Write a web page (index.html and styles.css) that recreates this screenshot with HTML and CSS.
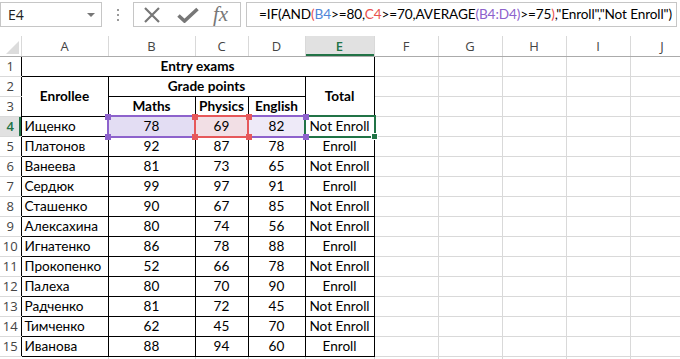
FILE: index.html
```html
<!DOCTYPE html>
<html lang="en">
<head>
    <meta charset="UTF-8">
    <title>Entry exams</title>
    <link rel="stylesheet" href="styles.css">
</head>
<body>
    <div class="formula-bar">
        <div class="name-box">
            <span>E4</span>
            <span class="dropdown"></span>
        </div>
        <div class="grip">
            <span></span><span></span><span></span>
        </div>
        <div class="fx-buttons">
            <svg class="icon" width="18" height="16" viewBox="0 0 18 16">
                <path d="M2 1 L16 15 M16 1 L2 15" stroke="#777" stroke-width="2.2" fill="none"/>
            </svg>
            <svg class="icon" width="22" height="16" viewBox="0 0 22 16">
                <path d="M1.5 8.5 L7.5 14 L20.5 2" stroke="#777" stroke-width="3.6" fill="none"/>
            </svg>
            <span class="fx">fx</span>
        </div>
        <div class="formula-input">=IF(AND<span class="paren">(</span><span class="ref-blue">B4</span>&gt;=80,<span class="ref-red">C4</span>&gt;=70,AVERAGE<span class="ref-purple">(B4:D4)</span>&gt;=75<span class="paren">)</span>,"Enroll","Not Enroll")</div>
    </div>

    <div class="sheet-wrap">
        <table class="sheet">
            <colgroup>
                <col class="col-rowhead">
                <col class="col-a">
                <col class="col-b">
                <col class="col-c">
                <col class="col-d">
                <col class="col-e">
                <col class="col-rest">
                <col class="col-rest">
                <col class="col-rest">
                <col class="col-rest">
                <col class="col-rest">
            </colgroup>
            <thead>
                <tr>
                    <th class="corner"><span class="corner-mark"></span></th>
                    <th>A</th>
                    <th>B</th>
                    <th>C</th>
                    <th>D</th>
                    <th class="active">E</th>
                    <th>F</th>
                    <th>G</th>
                    <th>H</th>
                    <th>I</th>
                    <th>J</th>
                </tr>
            </thead>
            <tbody id="rows">
                <tr>
                    <th class="row-head">1</th>
                    <td colspan="5" class="cell bold title">Entry exams</td>
                    <td class="blank"></td><td class="blank"></td><td class="blank"></td><td class="blank"></td><td class="blank"></td>
                </tr>
                <tr>
                    <th class="row-head">2</th>
                    <td rowspan="2" class="cell bold">Enrollee</td>
                    <td colspan="3" class="cell bold">Grade points</td>
                    <td rowspan="2" class="cell bold">Total</td>
                    <td class="blank"></td><td class="blank"></td><td class="blank"></td><td class="blank"></td><td class="blank"></td>
                </tr>
                <tr>
                    <th class="row-head">3</th>
                    <td class="cell bold">Maths</td>
                    <td class="cell bold">Physics</td>
                    <td class="cell bold">English</td>
                    <td class="blank"></td><td class="blank"></td><td class="blank"></td><td class="blank"></td><td class="blank"></td>
                </tr>
            </tbody>
        </table>

        <div class="ref-box ref-box-purple"></div>
        <div class="ref-box ref-box-red"></div>
        <div class="select-box"></div>
        <span class="handle purple h-b-top"></span>
        <span class="handle purple h-b-bottom"></span>
        <span class="handle purple h-d-top"></span>
        <span class="handle purple h-d-bottom"></span>
        <span class="handle red h-c1-top"></span>
        <span class="handle red h-c1-bottom"></span>
        <span class="handle red h-c2-top"></span>
        <span class="handle red h-c2-bottom"></span>
        <span class="fill-handle"></span>
    </div>

    <script>
        const students = [
            ['Ищенко', 78, 69, 82, 'Not Enroll'],
            ['Платонов', 92, 87, 78, 'Enroll'],
            ['Ванеева', 81, 73, 65, 'Not Enroll'],
            ['Сердюк', 99, 97, 91, 'Enroll'],
            ['Сташенко', 90, 67, 85, 'Not Enroll'],
            ['Алексахина', 80, 74, 56, 'Not Enroll'],
            ['Игнатенко', 86, 78, 88, 'Enroll'],
            ['Прокопенко', 52, 66, 78, 'Not Enroll'],
            ['Палеха', 80, 70, 90, 'Enroll'],
            ['Радченко', 81, 72, 45, 'Not Enroll'],
            ['Тимченко', 62, 45, 70, 'Not Enroll'],
            ['Иванова', 88, 94, 60, 'Enroll']
        ];

        const tbody = document.getElementById('rows');
        const blanks = '<td class="blank"></td>'.repeat(5);

        students.forEach(function(s, i) {
            const rowNum = i + 4;
            const first = rowNum === 4;
            const tr = document.createElement('tr');
            tr.innerHTML = `
                <th class="row-head${first ? ' active' : ''}">${rowNum}</th>
                <td class="cell name">${s[0]}</td>
                <td class="cell${first ? ' fill-b' : ''}">${s[1]}</td>
                <td class="cell${first ? ' fill-c' : ''}">${s[2]}</td>
                <td class="cell${first ? ' fill-d' : ''}">${s[3]}</td>
                <td class="cell">${s[4]}</td>
                ${blanks}
            `;
            tbody.appendChild(tr);
        });

        const last = document.createElement('tr');
        last.innerHTML = '<th class="row-head">16</th>' + '<td class="blank"></td>'.repeat(10);
        tbody.appendChild(last);
    </script>
</body>
</html>
```

FILE: styles.css
```css
* {
    margin: 0;
    padding: 0;
    box-sizing: border-box;
}

body {
    width: 680px;
    height: 359px;
    overflow: hidden;
    background: #fff;
    font-family: 'Lato', 'Liberation Sans', sans-serif;
    color: #000;
}

/* formula bar */

.formula-bar {
    display: flex;
    align-items: flex-start;
    height: 36px;
    padding-top: 2px;
}

.name-box {
    width: 102px;
    height: 25px;
    border: 1px solid #c6c6c6;
    display: flex;
    align-items: center;
    justify-content: space-between;
    padding: 0 6px 0 7px;
    font-family: 'Open Sans', sans-serif;
    font-size: 14px;
    color: #222;
}

.dropdown {
    width: 0;
    height: 0;
    border-left: 4px solid transparent;
    border-right: 4px solid transparent;
    border-top: 4px solid #777;
}

.grip {
    width: 31px;
    height: 25px;
    display: flex;
    flex-direction: column;
    align-items: center;
    justify-content: center;
    gap: 3px;
}

.grip span {
    width: 2px;
    height: 2px;
    background: #9a9a9a;
}

.fx-buttons {
    width: 108px;
    height: 25px;
    border: 1px solid #c6c6c6;
    display: flex;
    align-items: center;
    padding-left: 9px;
    gap: 16px;
}

.fx {
    font-family: 'Liberation Serif', serif;
    font-style: italic;
    font-size: 21px;
    color: #777;
    line-height: 1;
    margin-left: -2px;
}

.formula-input {
    flex: 1;
    height: 25px;
    margin-left: 5px;
    margin-right: 3px;
    border: 1px solid #c6c6c6;
    padding-left: 12px;
    font-size: 13.6px;
    letter-spacing: -0.12px;
    line-height: 23px;
    white-space: nowrap;
    overflow: hidden;
}

.ref-blue { color: #4f86d8; }
.ref-red { color: #e8514d; }
.ref-purple { color: #8d62cc; }
.paren { color: #e8514d; }

/* sheet */

.sheet-wrap {
    position: relative;
}

.sheet {
    border-collapse: collapse;
    table-layout: fixed;
    width: 694px;
}

.col-rowhead { width: 21px; }
.col-a { width: 87px; }
.col-b { width: 87px; }
.col-c { width: 53px; }
.col-d { width: 57px; }
.col-e { width: 69px; }
.col-rest { width: 64px; }

.sheet tr {
    height: 20px;
}

.sheet thead th {
    font-family: 'Open Sans', sans-serif;
    font-weight: 400;
    font-size: 13px;
    color: #444;
    background: #fff;
    border-right: 1px solid #d9d9d9;
    border-bottom: 1px solid #ababab;
    padding: 0;
}

.sheet thead th.active {
    background: #e1e1e1;
    color: #217346;
    font-weight: 600;
    box-shadow: inset 0 -2px 0 #217346;
}

.corner {
    position: relative;
}

.corner-mark {
    position: absolute;
    right: 2px;
    bottom: 2px;
    width: 0;
    height: 0;
    border-left: 13px solid transparent;
    border-bottom: 13px solid #dcdcdc;
}

.row-head {
    font-family: 'Open Sans', sans-serif;
    font-weight: 400;
    font-size: 13px;
    color: #444;
    text-align: center;
    border-bottom: 1px solid #d9d9d9;
    padding: 0;
}

.row-head.active {
    background: #e1e1e1;
    color: #217346;
    font-weight: 600;
    box-shadow: inset -2px 0 0 #217346;
}

.cell {
    border: 1px solid #000;
    font-size: 13.6px;
    text-align: center;
    padding: 0 2px;
    white-space: nowrap;
    overflow: hidden;
}

.cell.bold {
    font-weight: 700;
}

.cell.title {
    border-top: none;
}

.cell.name {
    text-align: left;
    padding-left: 3px;
}

.fill-b { background: #e3ddf3; }
.fill-c { background: #f2dfe5; }
.fill-d { background: #eeeaf8; }

.blank {
    border-right: 1px solid #d9d9d9;
    border-bottom: 1px solid #d9d9d9;
}

/* reference and selection outlines over the grid */

.ref-box,
.select-box {
    position: absolute;
    border: 2px solid;
    height: 23px;
    top: 79px;
}

.ref-box-purple {
    left: 107px;
    width: 199px;
    border-color: #8d62cc;
}

.ref-box-red {
    left: 194px;
    width: 55px;
    border-color: #e6585a;
}

.select-box {
    left: 304px;
    width: 72px;
    border-color: #217346;
}

.handle {
    position: absolute;
    width: 6px;
    height: 6px;
}

.handle.purple { background: #8d62cc; }
.handle.red { background: #e6585a; }

.h-b-top { left: 105px; top: 78px; }
.h-b-bottom { left: 105px; top: 98px; }
.h-d-top { left: 303px; top: 78px; }
.h-d-bottom { left: 303px; top: 98px; }
.h-c1-top { left: 192px; top: 78px; }
.h-c1-bottom { left: 192px; top: 98px; }
.h-c2-top { left: 246px; top: 78px; }
.h-c2-bottom { left: 246px; top: 98px; }

.fill-handle {
    position: absolute;
    left: 371px;
    top: 97px;
    width: 7px;
    height: 7px;
    background: #217346;
    border: 1px solid #fff;
}
```
